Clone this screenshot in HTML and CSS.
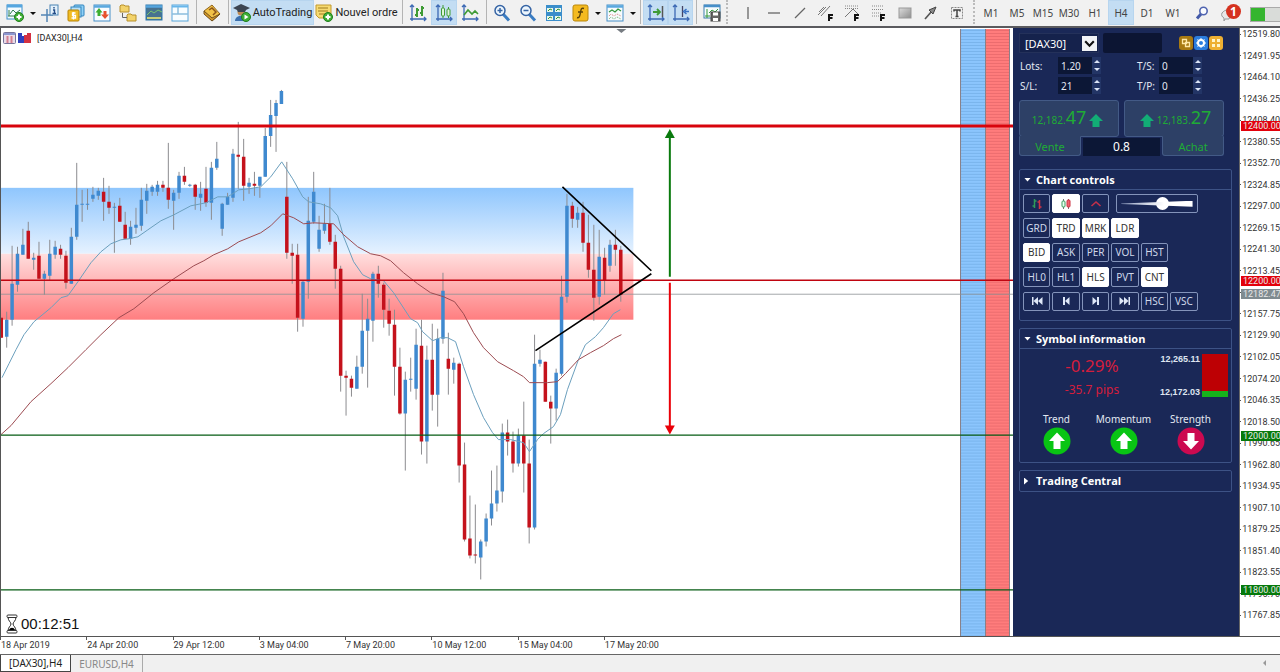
FILE: index.html
```html
<!DOCTYPE html>
<html lang="fr">
<head>
<meta charset="utf-8">
<title>[DAX30],H4</title>
<link rel="stylesheet" href="styles.css">
</head>
<body>
<header class="toolbar">
  <button class="tool" aria-label="Nouveau graphique"><svg viewBox="0 0 18 18"><rect x="1" y="1" width="15" height="14" fill="#f4fbff" stroke="#3f8fca"/><path d="M1 2h15" stroke="#55a6e0" stroke-width="3"/><path d="M3 12V6M2 12h10M4 10l3-4 3 3 4-3" stroke="#2f7f4f" fill="none"/><circle cx="13" cy="13" r="4.500" fill="#3fae34" stroke="#1f7e1c"/><path d="M13 10.500v5M10.500 13h5" stroke="#fff" stroke-width="2"/></svg></button>
  <button class="caret" aria-label="Liste des graphiques"></button>
  <button class="tool" aria-label="Réticule"><svg viewBox="0 0 18 18"><path d="M6 5v13M0 11h12" stroke="#5485b5" stroke-width="1.500"/><rect x="9" y="1" width="8" height="10" fill="#e4f1fb" stroke="#4a84b4"/><path d="M13 3v1.500M12 6h1.500v3.500M11.500 9.500h3.500" stroke="#234c86" stroke-width="1.400" fill="none"/></svg></button>
  <button class="tool" aria-label="Symboles"><svg viewBox="0 0 18 18"><rect x="7" y="1" width="10" height="11" rx="1" fill="#8fd0f6" stroke="#2f83bd"/><rect x="4" y="3" width="10" height="10" fill="#b8e2fa" stroke="#2f83bd"/><rect x="1" y="6" width="11" height="11" rx="1" fill="#f1bd25" stroke="#b88205"/><path d="M8.500 9h-3v2.500h3V14h-4M6.500 8v7.500" stroke="#fff" stroke-width="1.300" fill="none"/></svg></button>
  <button class="tool" aria-label="Ordres"><svg viewBox="0 0 18 18"><rect x="1" y="1" width="16" height="16" fill="#f8fcff" stroke="#468fc8"/><path d="M1 2.500h16" stroke="#5aa8df" stroke-width="2.500"/><path d="M6 4L2.500 8.500H4.500V12h3V8.500h2z" fill="#3cae31"/><path d="M12 15l-4-4.500h2.500V7h3v3.500H16z" fill="#e6512c"/></svg></button>
  <button class="tool" aria-label="Navigateur"><svg viewBox="0 0 18 18"><path d="M1 2l1-1h3l1 1h4v6H1zM8 11l1-1h3l1 1h4v6H8z" fill="#f3d36b" stroke="#b7902c"/><path d="M3.500 9v4.500H8" stroke="#666" fill="none"/></svg></button>
  <button class="tool" aria-label="Terminal"><svg viewBox="0 0 18 18"><rect x="1" y="1" width="16" height="15" fill="#47728f" stroke="#2e78ae"/><path d="M1 2.500h16" stroke="#55a6df" stroke-width="2.500"/><path d="M2 11l4-4 3 2 4-3 4 2" stroke="#79c470" fill="none"/><path d="M2 14h14" stroke="#c9cf7a" stroke-width="2"/></svg></button>
  <button class="tool" aria-label="Disposition"><svg viewBox="0 0 18 18"><rect x="1" y="1" width="16" height="16" fill="#f8fdff" stroke="#58a6db"/><path d="M1 2.500h16" stroke="#67b6eb" stroke-width="2"/><path d="M7 3v7M1 10h16" stroke="#8abddd" stroke-width="1.500"/></svg></button>
  <span class="sep"></span>
  <button class="tool" aria-label="MetaEditor"><svg viewBox="0 0 18 18"><path d="M1 7l8-6 8 9-8 7z" fill="#f1c146" stroke="#8f641e"/><path d="M1 7v3l8 7 8-7-8 4z" fill="#d49a2c" stroke="#71501d"/><path d="M6 6l3-2 4 4-3 3" stroke="#8b5418" stroke-width="1.500" fill="none"/></svg></button>
  <span class="sep"></span>
  <button class="tool wide auto on"><svg viewBox="0 0 18 18"><path d="M2 17c0-7 13-7 13 0z" fill="#3b70ae"/><circle cx="8" cy="8" r="3.500" fill="#bd8b55"/><path d="M0 4l8-4 9 4-4 2-1 2H5L4 6z" fill="#3c4552"/><circle cx="13" cy="13" r="4.500" fill="#3fae34" stroke="#1f7e1c"/><path d="M11.500 10.500L15.500 13l-4 2.500z" fill="#fff"/></svg>AutoTrading</button>
  <button class="tool wide order"><svg viewBox="0 0 18 18"><path d="M1 1h15v13H4l-3-3z" fill="#f7da71" stroke="#c29a2d"/><path d="M3 4h10M3 7h10M4 10h6" stroke="#9f7c20"/><circle cx="13" cy="13" r="4.500" fill="#3fae34" stroke="#1f7e1c"/><path d="M13 10.500v5M10.500 13h5" stroke="#fff" stroke-width="2"/></svg>Nouvel ordre</button>
  <span class="sep"></span>
  <button class="tool" aria-label="Barres"><svg viewBox="0 0 18 18"><path d="M3 1v14h14M1 3l2-2 2 2M15 13l2 2-2 2M1 15h2v2" stroke="#3c69b4" stroke-width="1.300" fill="none"/><path d="M8 4v9M6 11h2M8 6h2M13 2v10M11 9h2M13 4h2" stroke="#3f9b35" stroke-width="2"/></svg></button>
  <button class="tool on" aria-label="Chandeliers"><svg viewBox="0 0 18 18"><path d="M3 1v14h14M1 3l2-2 2 2M15 13l2 2-2 2M1 15h2v2" stroke="#3c69b4" stroke-width="1.300" fill="none"/><path d="M8 1v13M13.500 3v11" stroke="#3f9b35"/><rect x="6.500" y="4" width="3" height="8" rx="1" fill="#dff5da" stroke="#3f9b35"/><rect x="12" y="5" width="3" height="7" rx="1" fill="#dff5da" stroke="#3f9b35"/></svg></button>
  <button class="tool" aria-label="Ligne"><svg viewBox="0 0 18 18"><path d="M3 1v14h14M1 3l2-2 2 2M15 13l2 2-2 2M1 15h2v2" stroke="#3c69b4" stroke-width="1.300" fill="none"/><path d="M3 11l4-5 4 4 3-3 3 3" stroke="#3f9b35" stroke-width="1.600" fill="none"/></svg></button>
  <span class="sep"></span>
  <button class="tool" aria-label="Zoom avant"><svg viewBox="0 0 18 18"><path d="M10 10l6 6.500" stroke="#3a7cc2" stroke-width="3"/><circle cx="7" cy="6.500" r="5" fill="#edf6fd" stroke="#3563a4" stroke-width="1.500"/><path d="M7 4v5M4.500 6.500h5" stroke="#3563a4" stroke-width="1.500"/></svg></button>
  <button class="tool" aria-label="Zoom arrière"><svg viewBox="0 0 18 18"><path d="M10 10l6 6.500" stroke="#3a7cc2" stroke-width="3"/><circle cx="7" cy="6.500" r="5" fill="#edf6fd" stroke="#3563a4" stroke-width="1.500"/><path d="M4.500 6.500h5" stroke="#3563a4" stroke-width="1.500"/></svg></button>
  <button class="tool" aria-label="Mosaïque"><svg viewBox="0 0 18 18"><rect x="1" y="1" width="16" height="16" fill="#3b8ecb"/><path d="M2 4h6v4H2zM10 4h6v4h-6zM2 12h6v4H2zM10 12h6v4h-6z" fill="#e9f7e9"/><path d="M3 7l2-2 2 1M11 7l2-2 2 1M3 15l2-2 2 1M11 15l2-2 2 1" stroke="#33913b" fill="none"/></svg></button>
  <button class="tool" aria-label="Indicateurs"><svg viewBox="0 0 18 18"><rect x="2" y="1" width="15" height="16" rx="2" fill="#f4ba20" stroke="#ba870a"/><path d="M13 4.500c-3-1-3 1-3.500 4S8.500 14.500 6 13.500M7 8h5" stroke="#5b430a" stroke-width="1.400" fill="none"/></svg></button>
  <button class="caret" aria-label="Liste des indicateurs"></button>
  <button class="tool" aria-label="Modèles"><svg viewBox="0 0 18 18"><rect x="1" y="1" width="16" height="16" fill="#f7fcfd" stroke="#468fc8"/><path d="M1 2.500h16" stroke="#5aa8df" stroke-width="2.500"/><path d="M3 8l3-2 3 2 3-3 3 2" stroke="#35983c" stroke-width="1.300" fill="none"/><path d="M3 12l2-2 3 2 3-2 4 2" stroke="#d47575" fill="none" stroke-dasharray="1 1"/><path d="M3 15l2-2 3 2 3-2 4 2" stroke="#6aa86a" fill="none" stroke-dasharray="1 1"/></svg></button>
  <button class="caret" aria-label="Liste des modèles"></button>
  <span class="sep"></span>
  <button class="tool narrow on" aria-label="Défilement automatique"><svg viewBox="0 0 18 18"><path d="M3 1v14h14M1 3l2-2 2 2M15 13l2 2-2 2M1 15h2v2" stroke="#3c69b4" stroke-width="1.300" fill="none"/><path d="M6 8h6M10 5l3 3-3 3" stroke="#3f9b35" stroke-width="1.800" fill="none"/><path d="M15.500 2v11" stroke="#555" stroke-width="1.500"/></svg></button>
  <button class="tool narrow on" aria-label="Décalage du graphique"><svg viewBox="0 0 18 18"><path d="M3 1v14h14M1 3l2-2 2 2M15 13l2 2-2 2M1 15h2v2" stroke="#3c69b4" stroke-width="1.300" fill="none"/><path d="M10.500 2v11" stroke="#446" stroke-width="1.300"/><path d="M17 7.500h-4M14.500 5l-3 2.500 3 2.500" stroke="#3a72c4" stroke-width="1.500" fill="none"/></svg></button>
  <span class="sep"></span>
  <button class="tool narrow" aria-label="Enregistrer"><svg viewBox="0 0 18 18"><rect x="1" y="1" width="16" height="13" fill="#f7fcfd" stroke="#3f7fae"/><path d="M1 2h16" stroke="#478fc9" stroke-width="2.500"/><path d="M4 5v9M2 12h5M6 9l3-3 3 2 3-3" stroke="#35983c" fill="none"/><rect x="8" y="8" width="9" height="9" fill="#666" stroke="#444"/><path d="M10 8.500h5v3h-5zM10 14h5v3h-5z" fill="#fff"/></svg></button>
  <span class="sep dotted"></span>
  <div class="group draw">
    <button class="tool" aria-label="Ligne verticale"><svg viewBox="0 0 18 18"><path d="M9 3v12" stroke="#666" stroke-width="1.300"/></svg></button>
    <button class="tool" aria-label="Ligne horizontale"><svg viewBox="0 0 18 18"><path d="M3 9h12" stroke="#666" stroke-width="1.300"/></svg></button>
    <button class="tool" aria-label="Ligne de tendance"><svg viewBox="0 0 18 18"><path d="M4 14L14 4" stroke="#666" stroke-width="1.300"/></svg></button>
    <button class="tool" aria-label="Canal"><svg viewBox="0 0 18 18"><path d="M1 11l8-8M4 12l9-10M2 8l5-5" stroke="#777"/><path d="M12 17v-6h4M12 14h3.500" stroke="#111" stroke-width="2" fill="none"/></svg></button>
    <button class="tool" aria-label="Éventail"><svg viewBox="0 0 18 18"><path d="M2 2h13M2 4.500h13" stroke="#888" stroke-dasharray="1 1"/><path d="M2 13l8-8M10 5l5 5" stroke="#777"/><path d="M12 17v-6h4M12 14h3.500" stroke="#111" stroke-width="2" fill="none"/></svg></button>
    <button class="tool" aria-label="Fibonacci"><svg viewBox="0 0 18 18"><path d="M3 2h12M3 5.500h12M3 9h9M3 12h7" stroke="#888" stroke-dasharray="1 1"/><path d="M12 17v-6h4M12 14h3.500" stroke="#111" stroke-width="2" fill="none"/></svg></button>
    <button class="tool" aria-label="Rectangle"><svg viewBox="0 0 18 18"><defs><linearGradient id="gr" x1="0" y1="0" x2="1" y2="1"><stop offset="0" stop-color="#ddd"/><stop offset="1" stop-color="#8d8d8d"/></linearGradient></defs><rect x="4" y="4" width="12" height="10" fill="url(#gr)" stroke="#999"/></svg></button>
    <button class="tool" aria-label="Flèche"><svg viewBox="0 0 18 18"><path d="M4 15l7-8" stroke="#555" stroke-width="1.600"/><path d="M15 3l-7 3 4 4z" fill="#888" stroke="#444"/></svg></button>
    <button class="tool" aria-label="Texte"><svg viewBox="0 0 18 18"><rect x="4.500" y="3.500" width="11" height="11" fill="none" stroke="#888" stroke-dasharray="2 1"/><path d="M7 7.500V6h6v1.500M10 6v6M8.500 12.500h3" stroke="#444" stroke-width="1.500" fill="none"/></svg></button>
  </div>
  <span class="sep dotted"></span>
  <nav class="group frames">
    <button class="tool">M1</button><button class="tool">M5</button><button class="tool">M15</button><button class="tool">M30</button><button class="tool">H1</button><button class="tool on">H4</button><button class="tool">D1</button><button class="tool">W1</button>
  </nav>
  <button class="tool search" aria-label="Rechercher"><svg viewBox="0 0 18 18"><path d="M8 10l-4 4.500" stroke="#4259a8" stroke-width="3"/><circle cx="10.500" cy="7" r="3.700" fill="#fafcff" stroke="#5064b0" stroke-width="1.600"/></svg></button>
  <button class="tool bell" aria-label="Notifications"><svg viewBox="0 0 24 18"><path d="M3 9c3-4 8-4 10 0l-3 6H6l-1 2v-3c-2-1-3-3-2-5z" fill="#e8e8e8" stroke="#999"/></svg><span class="badge">1</span></button>
  <span class="battery"></span>
</header>

<main class="work">
  <section class="chart">
    <svg class="plot" viewBox="0 28 1013 609" role="img" aria-label="DAX30 H4">
      <defs>
        <linearGradient id="zoneUp" x1="0" y1="0" x2="0" y2="1"><stop offset="0" stop-color="#8fc6fd"/><stop offset="1" stop-color="#e6f2ff"/></linearGradient>
        <linearGradient id="zoneDown" x1="0" y1="0" x2="0" y2="1"><stop offset="0" stop-color="#ffdede"/><stop offset="1" stop-color="#ff7e80"/></linearGradient>
        <pattern id="stripeBlue" width="25" height="3" patternUnits="userSpaceOnUse"><rect width="25" height="3" fill="#8bc5fd"/><rect width="25" height="1" fill="#79b4ec"/></pattern>
        <pattern id="stripeRed" width="25" height="3" patternUnits="userSpaceOnUse"><rect width="25" height="3" fill="#ff7c7c"/><rect width="25" height="1" fill="#ec6c6e"/></pattern>
      </defs>
      <rect x="0" y="188" width="633" height="66" fill="url(#zoneUp)"/>
      <rect x="0" y="254" width="633" height="66" fill="url(#zoneDown)"/>
      <rect x="960" y="29" width="25" height="608" fill="url(#stripeBlue)"/>
      <rect x="985" y="29" width="24" height="608" fill="url(#stripeRed)"/>
      <path d="M960.500 29v608M985.500 29v608M1009.500 29v608" stroke="#8a8088"/>
      <path d="M0 294.500h1013" stroke="#8d9294" stroke-opacity=".8"/>
      <g id="candles"></g>
      <path class="ma fast" d="M1 378L8 364 15 350 23 335 33 322 50 308 60 298 67 296 77 282 90 263 100 252 110 244 120 240 128 239 137 237 147 230 160 221 173 215 190 206 205 203 217 197 227 197 238 190 248 189 260 187 270 177 281 162 292 179 302 197 308 202 320 204 330 208 337 216 343 237 353 262 362 275 370 279 383 281 393 293 410 319 417 323 422 332 432 341 440 338 447 338 455 342 463 367 473 395 483 418 492 433 498 440 510 440 523 443 529 452 537 440 543 434 553 427 560 415 567 390 578 360 585 345 595 337 603 328 613 314 620 310"/>
      <path class="ma slow" d="M0 435L10 426 30 402 50 384 67 368 85 350 100 335 118 318 133 309 153 293 173 279 193 266 203 261 213 255 227 249 238 242 260 233 270 226 282 214 293 218 303 224 313 223 333 224 343 235 357 247 370 254 380 256 390 261 403 273 417 284 430 293 443 297 454 302 463 314 473 333 483 348 497 362 513 371 523 377 529 383 547 383 557 382 565 374 578 360 590 353 603 346 613 339 621 335"/>
      <path d="M0 126h1013" stroke="#d8040c" stroke-width="3"/>
      <path d="M0 280.500h1013" stroke="#c00510" stroke-width="1.400"/>
      <path d="M0 435.500h1013M0 590.500h1013" stroke="#075c14" stroke-width="1.300"/>
      <path d="M562 187l89 84M535 351l116-77" stroke="#000" stroke-width="1.600"/>
      <path d="M669.500 277V136" stroke="#0a7a0e" stroke-width="2"/><path d="M664.500 138l5-9 5 9z" fill="#0a7a0e"/>
      <path d="M669.500 283V428" stroke="#ea0008" stroke-width="2"/><path d="M664.500 426l5 9 5-9z" fill="#ea0008"/>
      <path d="M616 29h10l-5 4z" fill="#777c82"/>
    </svg>
    <div class="title">
      <svg viewBox="0 0 28 12"><rect x=".5" y=".5" width="12" height="11" rx="1" fill="#eadbe8" stroke="#76749c"/><path d="M1 2h11" stroke="#8b96d0" stroke-width="2"/><path d="M4.500 4v7M8.500 4v7" stroke="#d47f90" stroke-width="2"/><path d="M15 1h4v3h2v7h-6z" fill="#2f3fbd"/><path d="M21 3h3V1h4v10h-7z" fill="#d43142"/></svg>
      <span>[DAX30],H4</span>
    </div>
    <div class="timer">
      <svg viewBox="0 0 12 20"><path d="M2 3c0 4 3 5 3 7s-3 3-3 7h8c0-4-3-5-3-7s3-3 3-7z" fill="#fff" stroke="#222"/><path d="M3 16c1-3 5-3 6 0z" fill="#000"/><rect x="1" y="1" width="10" height="2.500" rx="1" fill="#fff" stroke="#333"/><rect x="1" y="16.500" width="10" height="2.500" rx="1" fill="#fff" stroke="#333"/></svg>
      <span>00:12:51</span>
    </div>
  </section>

  <aside class="panel">
    <div class="head">
      <label class="symbol"><select aria-label="Symbole"><option>[DAX30]</option></select><svg viewBox="0 0 14 14"><path d="M3 5l4 4 4-4" fill="none" stroke="#111" stroke-width="2"/></svg></label>
      <input class="search-box" type="text" aria-label="Recherche">
      <div class="head-icons">
        <button class="gold" aria-label="Copier"><svg viewBox="0 0 14 14"><path d="M3.500 3.500h4v4h-4zM6.500 6.500h4v4h-4z" fill="none" stroke="#ffe9a8" stroke-width="1.300"/></svg></button>
        <button class="blue" aria-label="Réglages"><svg viewBox="0 0 14 14"><circle cx="7" cy="7" r="3" fill="none" stroke="#fff" stroke-width="2"/><path d="M7 2v2M7 10v2M2 7h2M10 7h2M3.500 3.500l1 1M9.500 9.500l1 1M3.500 10.500l1-1M9.500 4.500l1-1" stroke="#fff"/></svg></button>
        <button class="amber" aria-label="Grille"><svg viewBox="0 0 14 14"><path d="M3 3h3v3H3zM8 3h3v3H8zM3 8h3v3H3zM8 8h3v3H8z" fill="#fff4c8"/></svg></button>
      </div>
    </div>
    <div class="fields">
      <label for="lots">Lots:</label><span class="num"><input id="lots" value="1.20"><i></i></span>
      <label for="ts">T/S:</label><span class="num"><input id="ts" value="0"><i></i></span>
      <label for="sl">S/L:</label><span class="num"><input id="sl" value="21"><i></i></span>
      <label for="tp">T/P:</label><span class="num"><input id="tp" value="0"><i></i></span>
    </div>
    <div class="deal">
      <button class="price">12,182.<b>47</b><svg viewBox="0 0 14 14"><path d="M7 0l7 7h-3.500v6h-7V7H0z" fill="#12ad76"/></svg></button>
      <button class="price"><svg viewBox="0 0 14 14"><path d="M7 0l7 7h-3.500v6h-7V7H0z" fill="#12ad76"/></svg>12,183.<b>27</b></button>
    </div>
    <div class="deal-foot"><button>Vente</button><output>0.8</output><button>Achat</button></div>

    <section class="card">
      <h2 class="open">Chart controls</h2>
      <div class="keys">
        <button aria-label="Barres"><svg viewBox="0 0 12 12"><path d="M3.500 1v9M1.500 8h2M3.500 3h2" stroke="#2f9a5a" stroke-width="1.500"/><path d="M8.500 2v9M6.500 4h2M8.500 9h2" stroke="#d13446" stroke-width="1.500"/></svg></button>
        <button class="sel" aria-label="Chandeliers"><svg viewBox="0 0 12 12"><path d="M3.500 1v10M8.500 1v10" stroke="#777"/><rect x="2" y="3" width="3" height="6" rx="1" fill="#e8fff0" stroke="#3d9c5d"/><rect x="7" y="2" width="3" height="7" rx="1" fill="#f06470" stroke="#cc3040"/></svg></button>
        <button aria-label="Ligne"><svg viewBox="0 0 12 12"><path d="M1.500 8L6 4l4.500 4" fill="none" stroke="#c3304a" stroke-width="1.600"/></svg></button>
        <label class="slide"><input type="range" min="0" max="100" value="59" aria-label="Échelle"></label>
        <button class="row">GRD</button><button class="sel">TRD</button><button class="sel">MRK</button><button class="sel">LDR</button>
        <button class="row sel">BID</button><button>ASK</button><button>PER</button><button>VOL</button><button>HST</button>
        <button class="row">HL0</button><button>HL1</button><button class="sel">HLS</button><button>PVT</button><button class="sel">CNT</button>
        <button class="row" aria-label="Début"><svg viewBox="0 0 12 12"><path d="M1 2h1.500v8H1zM7 2v8L2.500 6zM11.500 2v8L7 6z" fill="#dfe8f8"/></svg></button>
        <button aria-label="Précédent"><svg viewBox="0 0 12 12"><path d="M3 2h2v8H3zM9.500 2v8L5 6z" fill="#dfe8f8"/></svg></button>
        <button aria-label="Suivant"><svg viewBox="0 0 12 12"><path d="M9 2H7v8h2zM2.500 2v8L7 6z" fill="#dfe8f8"/></svg></button>
        <button aria-label="Fin"><svg viewBox="0 0 12 12"><path d="M11 2H9.500v8H11zM5 2v8l4.500-4zM.5 2v8L5 6z" fill="#dfe8f8"/></svg></button>
        <button>HSC</button><button>VSC</button>
      </div>
    </section>

    <section class="card">
      <h2 class="open">Symbol information</h2>
      <div class="info">
        <div class="change"><strong>-0.29%</strong><span>-35.7 pips</span></div>
        <div class="range"><span>12,265.11</span><span>12,172.03</span></div>
        <div class="meter"></div>
      </div>
      <div class="signals">
        <div>Trend<svg viewBox="0 0 28 28"><circle cx="14" cy="14" r="13.500" fill="#09c514"/><path d="M14 5.500l8 8.500h-4.500v8h-7v-8H6z" fill="#fff"/></svg></div>
        <div>Momentum<svg viewBox="0 0 28 28"><circle cx="14" cy="14" r="13.500" fill="#09c514"/><path d="M14 5.500l8 8.500h-4.500v8h-7v-8H6z" fill="#fff"/></svg></div>
        <div>Strength<svg viewBox="0 0 28 28"><circle cx="14" cy="14" r="13.500" fill="#cc0a50"/><path d="M14 22.500l8-8.500h-4.500V6h-7v8H6z" fill="#fff"/></svg></div>
      </div>
    </section>

    <section class="card"><h2>Trading Central</h2></section>
  </aside>

  <div class="scale">
    <ol>
      <li>12519.80</li><li>12491.95</li><li>12464.10</li><li>12436.25</li><li>12408.40</li><li>12380.55</li><li>12352.70</li><li>12324.85</li><li>12297.00</li><li>12269.15</li><li>12241.30</li><li>12213.45</li><li></li><li>12157.75</li><li>12129.90</li><li>12102.05</li><li>12074.20</li><li>12046.35</li><li>12018.50</li><li>11990.65</li><li>11962.80</li><li>11934.95</li><li>11907.10</li><li>11879.25</li><li>11851.40</li><li>11823.55</li><li>11795.70</li><li>11767.85</li>
    </ol>
    <span class="tag red" style="top:16.1%">12400.00</span>
    <span class="tag red" style="top:41.6%">12200.00</span>
    <span class="tag gray" style="top:43.8%">12182.47</span>
    <span class="tag green" style="top:67%">12000.00</span>
    <span class="tag green" style="top:92.400%">11800.00</span>
  </div>
</main>

<div class="times"><span>18 Apr 2019</span><span>24 Apr 20:00</span><span>29 Apr 12:00</span><span>3 May 04:00</span><span>7 May 20:00</span><span>10 May 12:00</span><span>15 May 04:00</span><span>17 May 20:00</span></div>

<footer class="tabs"><button class="current">[DAX30],H4</button><button>EURUSD,H4</button><span class="scroll"></span></footer>
<script src="chart.js"></script>
</body>
</html>
```
FILE: styles.css
```css
* { box-sizing: border-box; }
body { margin: 0; min-height: 100vh; display: flex; flex-direction: column; background: #fff; color: #222; font-family: "Noto Sans", "Open Sans", sans-serif; font-size: 9px; overflow-x: hidden; }
button, input, select { font: inherit; color: inherit; border: 0; margin: 0; padding: 0; background: none; }
svg { display: block; }

/* toolbar */
.toolbar { display: flex; align-items: stretch; height: 28px; padding-left: 2px; background: #f1f1f1; border-bottom: 2px solid #5a5a5e; overflow: hidden; }
.tool { flex: none; width: 26px; height: 25px; display: flex; align-items: center; justify-content: center; color: #444; font-size: 10px; }
.tool svg { width: 18px; height: 18px; flex: none; }
.tool.narrow { width: 25px; }
.tool.on { background: #c3ddf3; border: 1px solid #b7d5ef; }
.tool.wide { gap: 2px; color: #222; white-space: nowrap; font: 11px Roboto, "Noto Sans", sans-serif; }
.auto { width: 83px; }
.order { width: 85px; }
.caret { flex: none; width: 9px; display: flex; align-items: center; justify-content: center; }
.caret::before { content: ""; border: 3px solid transparent; border-top-color: #111; border-bottom: 0; }
.sep { flex: none; width: 6px; height: 24px; display: flex; justify-content: center; }
.sep::before { content: ""; border-left: 1px solid #b4b4b4; }
.sep.dotted::before { border-left: 2px dotted #bbb; }
.group { display: flex; flex: none; }
.draw { margin-left: 5px; margin-right: 2px; }
.frames { margin-left: 1px; }
.search { margin-left: 3px; }
.bell { width: 32px; position: relative; }
.bell svg { width: 24px; }
.badge { position: absolute; right: 6px; top: 4px; width: 15px; height: 15px; border-radius: 50%; background: #d5321f; color: #fff; font: bold 12px/15px "Noto Sans", sans-serif; text-align: center; }
.battery { flex: 1; margin: 7px 0 4px 3px; border: 1px solid #aaa; border-right: 0; background: linear-gradient(90deg, #35b52f 14px, #d9dcd9 14px); }

/* work area */
.work { display: grid; grid-template-columns: 1fr 226px 41px; border-bottom: 1px solid #555; }
.chart { position: relative; border-left: 1px solid #555; }
.plot { width: 100%; height: auto; }
.ma { fill: none; stroke-linejoin: round; }
.fast { stroke: #6a9fbd; }
.slow { stroke: #9c4a50; }
.wick { stroke: #8c8c90; fill: none; }
.up { stroke: #3f89cf; stroke-width: 3.500; fill: none; }
.down { stroke: #c4121c; stroke-width: 3.500; fill: none; }
.title { position: absolute; left: 2px; top: 4px; display: flex; align-items: center; gap: 6px; font-family: Roboto, "Noto Sans", sans-serif; line-height: 12px; }
.title svg { width: 28px; height: 12px; }
.timer { position: absolute; left: 5px; bottom: 2px; display: flex; align-items: center; gap: 3px; font: 15px/20px "Liberation Sans", Arial, sans-serif; color: #111; }
.timer svg { width: 12px; height: 20px; }

/* price scale */
.scale { position: relative; border-left: 1px solid #666; overflow: hidden; font-family: Roboto, "Noto Sans", sans-serif; }
.scale ol { list-style: none; margin: 0; padding: 0 0 15px; height: 100%; display: flex; flex-direction: column; justify-content: space-between; }
.scale li { display: flex; align-items: center; gap: 1px; height: 12px; line-height: 12px; color: #333; }
.scale li::before { content: ""; width: 2px; border-top: 1px solid #555; }
.tag { position: absolute; left: 1px; right: 0; padding-left: 2px; transform: translateY(-50%); line-height: 10px; color: #e8e8e8; }
.tag.red { background: #e3000b; }
.tag.gray { background: #7f8b90; }
.tag.green { background: #057a0b; }

/* side panel */
.panel { background: #1a2857; color: #e3e8f2; padding: 5px 6px; display: flex; flex-direction: column; border-right: 1px solid #1a2857; }
.head { display: flex; align-items: center; height: 20px; gap: 4px; }
.symbol { display: flex; align-items: center; width: 80px; height: 20px; padding: 0 1px 0 5px; border: 1px solid #24315a; background: #15224c; }
.symbol select { flex: 1; min-width: 0; appearance: none; font-size: 11px; color: #fff; }
.symbol svg { width: 15px; height: 15px; background: #f1f3f6; }
.search-box { width: 59px; height: 20px; background: #0c1533; border-radius: 2px; }
.head-icons { display: flex; gap: 1px; margin-left: 13px; }
.head-icons button { width: 14px; height: 14px; border-radius: 3px; }
.gold { background: #a87a12; }
.blue { background: #2c7ddd; }
.amber { background: #eeb032; }
.fields { display: grid; grid-template-columns: 38px 79px 22px 1fr; row-gap: 3px; margin-top: 4px; align-items: center; font-size: 10px; padding-left: 1px; }
.num { display: flex; height: 17px; }
.num input { width: 34px; padding-left: 3px; background: #0c1736; }
.num i { width: 9px; display: flex; flex-direction: column; justify-content: space-around; align-items: center; background: #233566; }
.num i::before, .num i::after { content: ""; border: 3px solid transparent; }
.num i::before { border-bottom-color: #dbe4f5; border-top: 0; }
.num i::after { border-top-color: #dbe4f5; border-bottom: 0; }
.deal { display: grid; grid-template-columns: 1fr 1fr; gap: 5px; margin: 6px 8px 0 0; }
.price { height: 37px; display: flex; align-items: baseline; justify-content: center; padding-top: 4px; background: #2d4066; border: 1px solid #435a86; border-radius: 3px; font-size: 10px; color: #1fac35; }
.price b { font-weight: 400; font-size: 18px; }
.price svg { width: 14px; height: 14px; margin: 0 3px; align-self: center; }
.deal-foot { display: grid; grid-template-columns: 62px 1fr 62px; margin: -1px 8px 0 0; }
.deal-foot button { height: 20px; background: #2d4066; border: 1px solid #435a86; border-top-color: #2d4066; border-radius: 0 0 3px 3px; font-size: 11px; color: #1fac35; }
.deal-foot output { margin: 2px 2px 0; background: #0c1736; font-size: 12px; line-height: 18px; text-align: center; color: #fff; }
.card { border: 1px solid #3d5285; border-radius: 2px; margin-top: 7px; }
.deal-foot + .card { margin-top: 13px; }
.card h2 { margin: 0; height: 20px; display: flex; align-items: center; gap: 6px; padding-left: 4px; font: bold 11px/20px "Open Sans", "Noto Sans", sans-serif; color: #fff; }
.card h2::before { content: ""; width: 6px; height: 7px; background: #fff; clip-path: polygon(0 0, 70% 50%, 0 100%); }
.card h2.open { gap: 5px; border-bottom: 1px solid #3d5285; }
.card h2.open::before { width: 7px; height: 4px; clip-path: polygon(0 0, 100% 0, 50% 100%); }
.keys { display: grid; grid-template-columns: repeat(7, 1fr); grid-template-rows: repeat(5, 1fr); gap: 5px 2px; height: 117px; margin: 4px 4px 9px 3px; }
.keys button { display: flex; align-items: center; justify-content: center; border: 1px solid #8494bb; border-radius: 2px; font-size: 10px; color: #cfd8ea; }
.keys .row { grid-column-start: 1; }
.keys .sel { background: #fff; border-color: #fff; color: #333; }
.keys svg { width: 12px; height: 12px; }
.slide { grid-column: 4 / span 3; margin-left: 5px; display: grid; align-items: center; padding: 0 4px; border: 1px solid #8494bb; border-radius: 2px; }
.slide::before { content: ""; grid-area: 1 / 1; height: 6px; background: linear-gradient(90deg, #8f9dc0, #fff 60%); clip-path: polygon(0 45%, 100% 0, 100% 100%, 0 55%); }
.slide input { grid-area: 1 / 1; width: 100%; height: 14px; appearance: none; }
.slide input::-webkit-slider-thumb { appearance: none; width: 13px; height: 13px; border-radius: 50%; background: #fff; }
.info { display: grid; grid-template-columns: 1fr 54px 26px; gap: 2px; padding: 5px 3px 0 20px; }
.change { display: flex; flex-direction: column; align-items: center; color: #d51d3c; font-size: 12px; line-height: 24px; }
.change strong { font-weight: 400; font-size: 17px; }
.range { display: flex; flex-direction: column; justify-content: space-between; text-align: right; font: bold 9px/10px "Liberation Sans", Arial, sans-serif; color: #dfe5f0; height: 43px; }
.meter { height: 43px; background: linear-gradient(#bd0004 37px, #16b21c 37px); }
.signals { display: grid; grid-template-columns: repeat(3, 1fr); padding: 10px 7px 7px 3px; font-size: 10px; line-height: 14px; text-align: center; }
.signals svg { width: 28px; height: 28px; margin: 1px auto 0; }

/* time axis and tabs */
.times { display: flex; flex: 1; overflow: hidden; font-family: Roboto, "Noto Sans", sans-serif; }
.times span { flex: 0 0 6.740%; padding-left: 1px; line-height: 16px; white-space: nowrap; color: #333; background: linear-gradient(#555, #555) 0 0 / 1px 3px no-repeat; }
.tabs { display: flex; height: 18px; background: #f0f0f0; border-top: 1px solid #666; color: #888; font-size: 10px; }
.tabs button { padding: 0 8px; border-right: 1px solid #aaa; font-size: 10px; white-space: nowrap; }
.tabs .current { background: #fff; color: #222; border: 1px solid #444; border-top: 0; }
.scroll { margin: 5px 14px 0 auto; border: 3px solid transparent; border-right-color: #999; height: 6px; }
```
FILE: chart.js
```js
// Each row: direction, high, body top, body bottom, low (plot units).
const rows = `d 318 318 338 338
u 312 320 337 348
u 246 284 320 326
u 247 254 285 292
u 229 245 255 255
d 222 231 259 259
u 253 258 260 270
d 242 256 279 279
u 271 274 279 295
u 240 254 276 281
u 241 247 255 259
d 245 249 255 259
d 251 256 283 289
u 228 237 284 284
u 163 205 237 240
u 190 204 205 222
u 189 204 205 210
u 187 195 199 202
u 188 191 196 200
d 178 192 202 221
d 186 202 208 214
u 203 207 208 253
d 198 206 222 222
d 212 225 239 239
u 221 227 239 245
u 208 225 228 234
u 188 200 226 231
u 184 191 201 214
u 185 187 192 196
u 181 185 192 196
d 181 185 188 192
d 143 188 200 209
u 190 193 201 230
u 172 176 193 199
d 167 176 182 185
u 184 185 186 187
d 184 185 197 210
u 182 194 198 211
d 167 189 203 207
u 162 168 203 220
u 142 159 168 170
u 203 204 229 236
u 193 197 205 205
u 149 154 198 202
d 122 155 157 189
d 139 157 186 201
u 178 183 187 194
d 172 184 186 196
u 177 177 186 198
u 128 136 177 177
u 100 115 136 147
u 100 103 116 152
u 90 91 104 104
d 162 197 253 259
d 244 253 256 284
d 244 255 318 332
u 281 282 319 327
u 197 221 282 299
u 172 192 222 224
u 216 230 249 252
u 204 224 231 234
d 188 224 242 245
d 235 242 269 289
d 266 269 376 392
d 371 376 378 416
d 376 379 388 397
u 356 367 389 389
u 294 331 367 374
u 299 319 331 388
u 272 274 321 342
d 266 274 284 298
d 283 285 310 328
d 299 311 324 336
d 310 325 367 396
d 348 367 414 415
u 372 380 414 471
u 358 379 380 392
u 329 345 389 400
d 320 346 442 455
u 346 360 442 464
d 324 360 395 411
u 329 339 395 427
u 273 291 339 344
d 333 359 369 395
u 358 363 370 384
d 363 364 466 483
d 443 465 540 542
d 496 539 556 559
d 505 555 556 564
u 540 542 558 580
u 514 519 542 547
u 471 504 519 526
u 466 491 504 512
u 424 433 492 503
d 420 433 442 456
d 432 442 464 473
u 429 436 464 467
d 402 436 464 493
d 440 464 528 544
u 335 364 528 530
u 350 360 364 367
d 362 362 402 402
d 396 402 409 444
u 369 373 409 421
u 276 297 374 376
u 194 206 297 303
d 202 206 219 228
u 207 213 220 228
d 202 213 243 252
d 215 243 270 278
d 225 270 298 321
u 230 257 297 305
d 248 258 281 295
u 240 245 266 272
d 230 245 250 266
d 246 250 295 302`.split("\n").map(r => r.trim().split(" "));

const step = 5.392;
const start = 0.3;
const paths = { wick: "", up: "", down: "" };
rows.forEach(([dir, high, top, bottom, low], i) => {
  const x = (start + i * step).toFixed(1);
  paths.wick += `M${x} ${high}V${low}`;
  paths[dir === "u" ? "up" : "down"] += `M${x} ${top}V${bottom}`;
});
const group = document.getElementById("candles");
for (const name of Object.keys(paths)) {
  const path = document.createElementNS("http://www.w3.org/2000/svg", "path");
  path.setAttribute("class", name);
  path.setAttribute("d", paths[name]);
  group.appendChild(path);
}
```
